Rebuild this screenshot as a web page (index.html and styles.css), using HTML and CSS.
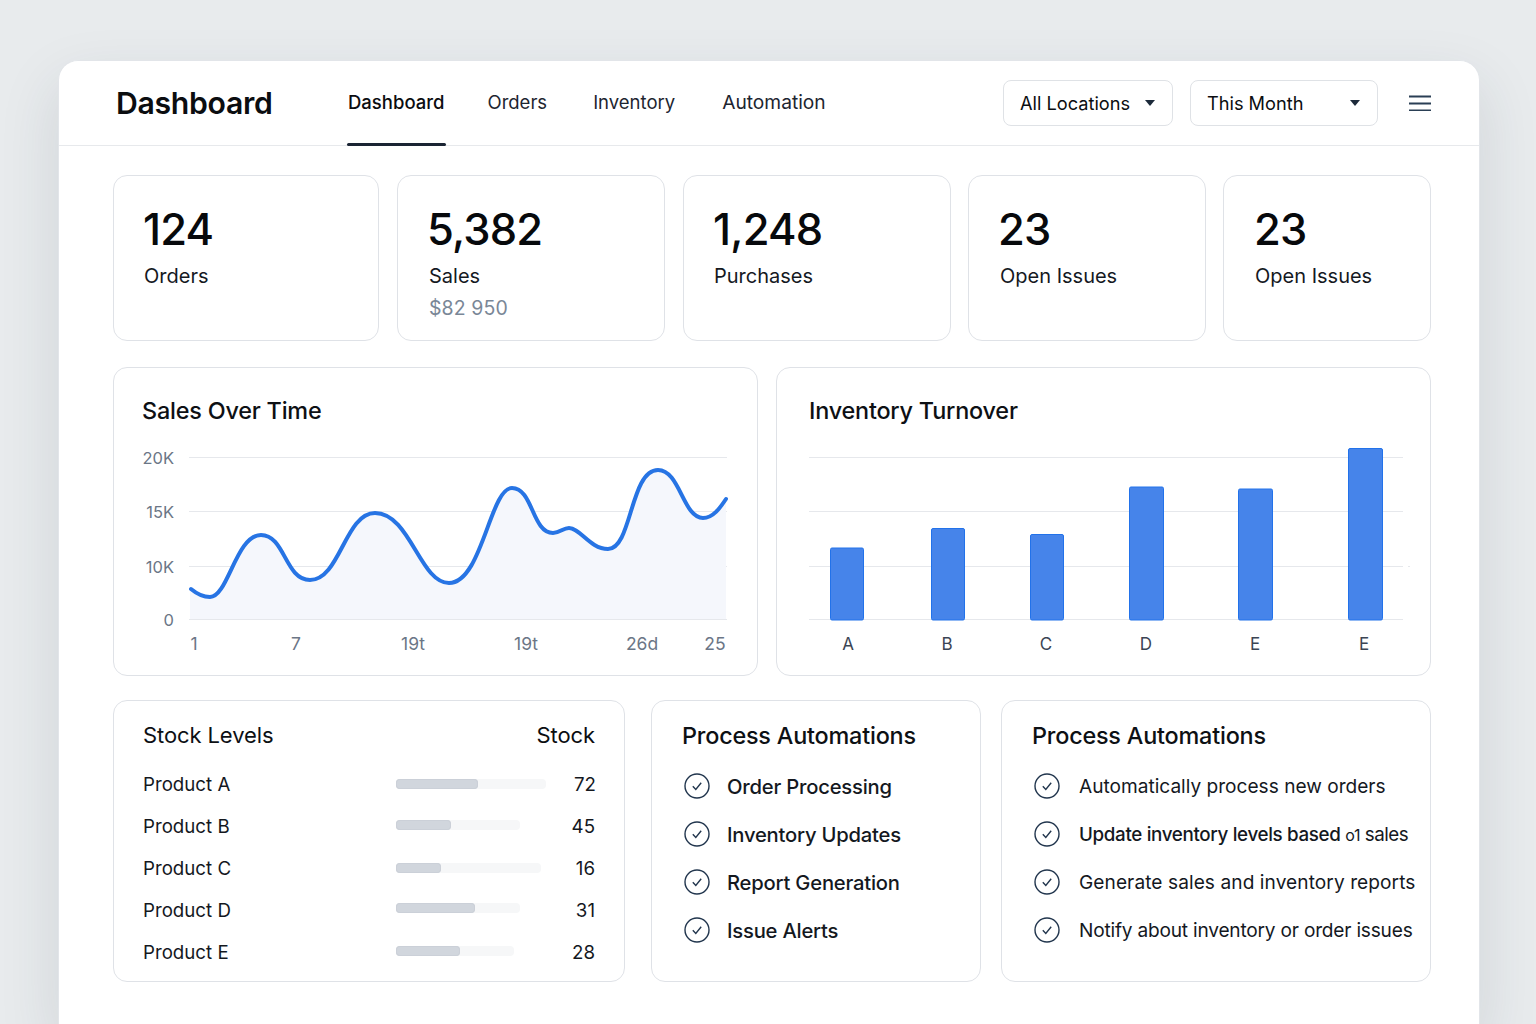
FILE: index.html
```html
<!DOCTYPE html>
<html lang="en">
<head>
<meta charset="utf-8">
<title>Dashboard</title>
<link rel="stylesheet" href="styles.css">
</head>
<body>
<main class="shell">
  <header class="topbar">
    <h1 class="brand">Dashboard</h1>
    <nav class="nav">
      <a class="nav-item active">Dashboard</a>
      <a class="nav-item nav-orders">Orders</a>
      <a class="nav-item nav-inventory">Inventory</a>
      <a class="nav-item nav-automation">Automation</a>
    </nav>
    <div class="controls">
      <div class="select select-loc"><span>All Locations</span><i class="caret"></i></div>
      <div class="select select-month"><span>This Month</span><i class="caret"></i></div>
      <svg class="menu" width="24" height="16" viewBox="0 0 24 16"><path d="M0 1.5h22M0 8.5h22M0 15.5h22"/></svg>
    </div>
  </header>
  <div class="content">
    <section class="stats">
      <div class="card stat"><div class="value">124</div><div class="label">Orders</div></div>
      <div class="card stat"><div class="value">5,382</div><div class="label">Sales</div><div class="sub">$82 950</div></div>
      <div class="card stat"><div class="value">1,248</div><div class="label">Purchases</div></div>
      <div class="card stat"><div class="value">23</div><div class="label">Open Issues</div></div>
      <div class="card stat"><div class="value">23</div><div class="label">Open Issues</div></div>
    </section>
    <section class="charts">
      <div class="card chart">
        <h2 class="title chart-title">Sales Over Time</h2>
        <svg class="plot" width="643" height="240" viewBox="114 440 643 240">
          <path class="grid" d="M189 457.5H727M189 511.5H727M189 566.5H727M189 619.5H727"/>
          <path class="area" d="M190 589C197 594 203 597 210 597C228 597 236 535 261 535C285 535 285 580 310 580C340 580 345 513 375 513C410 513 420 583 449 583C482 583 490 488 512 488C533 488 532 533 553 533C560 533 563 528 569 528C580 528 590 549 608 549C632 549 630 470 658 470C680 470 683 518 703 518C713 518 720 508 726 499V619H190Z"/>
          <path class="line" d="M191 589C197 594 203 597 210 597C228 597 236 535 261 535C285 535 285 580 310 580C340 580 345 513 375 513C410 513 420 583 449 583C482 583 490 488 512 488C533 488 532 533 553 533C560 533 563 528 569 528C580 528 590 549 608 549C632 549 630 470 658 470C680 470 683 518 703 518C713 518 720 508 726 499"/>
          <g class="axis axis-end">
            <text x="174" y="464">20K</text><text x="174" y="518">15K</text><text x="174" y="573">10K</text><text x="174" y="626">0</text>
          </g>
          <g class="axis axis-mid">
            <text x="194" y="650">1</text><text x="296" y="650">7</text><text x="413" y="650">19t</text><text x="526" y="650">19t</text><text x="642" y="650">26d</text><text x="715" y="650">25</text>
          </g>
        </svg>
      </div>
      <div class="card chart">
        <h2 class="title chart-title chart-title-b">Inventory Turnover</h2>
        <svg class="plot" width="653" height="240" viewBox="777 440 653 240">
          <path class="grid" d="M809 457.5H1403M809 511.5H1403M809 566.5H1403M809 619.5H1403M1408 566.5h2"/>
          <rect class="bar" x="830.5" y="548" width="33" height="72" rx="1.5"/>
          <rect class="bar" x="931.5" y="528.5" width="33" height="91.5" rx="1.5"/>
          <rect class="bar" x="1030.5" y="534.5" width="33" height="85.5" rx="1.5"/>
          <rect class="bar" x="1129.5" y="487" width="34" height="133" rx="1.5"/>
          <rect class="bar" x="1238.5" y="489" width="34" height="131" rx="1.5"/>
          <rect class="bar" x="1348.5" y="448.5" width="34" height="171.5" rx="1.5"/>
          <g class="axis axis-mid axis-dark">
            <text x="848" y="650">A</text><text x="947" y="650">B</text><text x="1046" y="650">C</text><text x="1146" y="650">D</text><text x="1255" y="650">E</text><text x="1364" y="650">E</text>
          </g>
        </svg>
      </div>
    </section>
    <section class="lower">
      <div class="card stock">
        <div class="stock-head"><h2 class="title stock-title">Stock Levels</h2><span class="title-side">Stock</span></div>
        <div class="stock-row"><span>Product A</span><div class="track" style="width:150px"><div class="fill" style="width:82px"></div></div><span class="qty">72</span></div>
        <div class="stock-row"><span>Product B</span><div class="track" style="width:124px"><div class="fill" style="width:55px"></div></div><span class="qty">45</span></div>
        <div class="stock-row"><span>Product C</span><div class="track" style="width:145px"><div class="fill" style="width:45px"></div></div><span class="qty">16</span></div>
        <div class="stock-row"><span>Product D</span><div class="track" style="width:124px"><div class="fill" style="width:79px"></div></div><span class="qty">31</span></div>
        <div class="stock-row"><span>Product E</span><div class="track" style="width:118px"><div class="fill" style="width:64px"></div></div><span class="qty">28</span></div>
      </div>
      <div class="card auto">
        <h2 class="title">Process Automations</h2>
        <ul class="checks">
          <li><svg class="check" width="26" height="26" viewBox="0 0 26 26"><circle cx="13" cy="13" r="12"/><path d="M8.8 13.2l3 3.2 5.4-6.6"/></svg>Order Processing</li>
          <li><svg class="check" width="26" height="26" viewBox="0 0 26 26"><circle cx="13" cy="13" r="12"/><path d="M8.8 13.2l3 3.2 5.4-6.6"/></svg>Inventory Updates</li>
          <li><svg class="check" width="26" height="26" viewBox="0 0 26 26"><circle cx="13" cy="13" r="12"/><path d="M8.8 13.2l3 3.2 5.4-6.6"/></svg>Report Generation</li>
          <li><svg class="check" width="26" height="26" viewBox="0 0 26 26"><circle cx="13" cy="13" r="12"/><path d="M8.8 13.2l3 3.2 5.4-6.6"/></svg>Issue Alerts</li>
        </ul>
      </div>
      <div class="card auto auto-long">
        <h2 class="title">Process Automations</h2>
        <ul class="checks">
          <li><svg class="check" width="26" height="26" viewBox="0 0 26 26"><circle cx="13" cy="13" r="12"/><path d="M8.8 13.2l3 3.2 5.4-6.6"/></svg>Automatically process new orders</li>
          <li class="strong"><svg class="check" width="26" height="26" viewBox="0 0 26 26"><circle cx="13" cy="13" r="12"/><path d="M8.8 13.2l3 3.2 5.4-6.6"/></svg><span>Update inventory levels based <small>o1</small> <em>sales</em></span></li>
          <li class="loose"><svg class="check" width="26" height="26" viewBox="0 0 26 26"><circle cx="13" cy="13" r="12"/><path d="M8.8 13.2l3 3.2 5.4-6.6"/></svg>Generate sales and inventory reports</li>
          <li class="tight"><svg class="check" width="26" height="26" viewBox="0 0 26 26"><circle cx="13" cy="13" r="12"/><path d="M8.8 13.2l3 3.2 5.4-6.6"/></svg>Notify about inventory or order issues</li>
        </ul>
      </div>
    </section>
  </div>
</main>
</body>
</html>
```
FILE: styles.css
```css
* { box-sizing: border-box; }
html, body { height: 100%; }
body {
  margin: 0;
  height: 1024px;
  overflow: hidden;
  padding: 60px 56px 0 58px;
  background: #e8ebed;
  color: #0b0d10;
  font-family: Inter, "Liberation Sans", sans-serif;
}
.shell {
  height: 964px;
  background: #fff;
  border: 1px solid #e2e5e9;
  border-bottom: 0;
  border-radius: 20px 20px 0 0;
  box-shadow: 0 24px 60px rgba(40, 52, 70, .13);
}
.topbar {
  height: 85px;
  display: flex;
  align-items: center;
  padding: 0 46px 0 57px;
  border-bottom: 1px solid #e7e9ec;
}
.brand { margin: 0 0 1px; font-size: 30.2px; font-weight: 600; letter-spacing: -.3px; width: 232px; }
.nav { display: flex; height: 100%; flex: 1; }
.nav-item { display: flex; align-items: center; padding-bottom: 2px; font-size: 18.5px; color: #1d2530; font-weight: 400; height: 100%; position: relative; }
.nav-orders { margin-left: 43px; }
.nav-inventory { margin-left: 46px; }
.nav-automation { margin-left: 47px; font-size: 19.2px; }
.nav-item.active { font-weight: 500; color: #0b0d10; }
.nav-item.active::after {
  content: "";
  position: absolute;
  left: -1px; right: -2px; bottom: -1px;
  height: 3.5px;
  border-radius: 2px;
  background: #1a2433;
}
.controls { display: flex; align-items: center; }
.select {
  height: 46px;
  display: flex;
  align-items: center;
  justify-content: space-between;
  padding: 0 17px 0 16px;
  border: 1px solid #dfe2e6;
  border-radius: 8px;
  font-size: 18.2px;
  background: #fff;
}
.select-loc { width: 170px; margin-right: 17px; }
.select-month { width: 188px; margin-right: 31px; }
.caret { width: 0; height: 0; border-left: 5px solid transparent; border-right: 5px solid transparent; border-top: 6px solid #1c2a3a; }
.menu { fill: none; stroke: #2a3f55; stroke-width: 2; }

.content { padding: 29px 47px 0 54px; display: flex; flex-direction: column; }
.card { background: #fff; border: 1px solid #dfe2e7; border-radius: 14px; }
.stats { display: grid; grid-template-columns: 266px 268px 268px 237px 208px; grid-template-rows: 166px; column-gap: 18px; }
.stats .card:nth-child(4) { margin-left: -1px; }
.stats .card:nth-child(5) { margin: 0 1px 0 -1px; }
.stat { padding: 25px 30px; }
.stat:nth-child(2), .stat:nth-child(4), .stat:nth-child(5) { padding-left: 31px; }
.value { font-size: 43.5px; font-weight: 500; line-height: 56px; letter-spacing: -.8px; margin-left: -1px; color: #07090c; }
.stat:nth-child(2) .value, .stat:nth-child(4) .value { margin-left: -2px; }
.label { font-size: 20px; line-height: 34px; margin-top: 2px; color: #15191f; }
.sub { font-size: 19.5px; line-height: 30px; color: #7a8797; letter-spacing: .1px; }

.charts { display: grid; grid-template-columns: 645px 655px; grid-template-rows: 309px; column-gap: 18px; margin-top: 26px; }
.chart { overflow: hidden; position: relative; }
.title { margin: 0; font-size: 23.4px; font-weight: 500; line-height: 30px; letter-spacing: -.2px; color: #0d1014; }
.chart-title { padding: 28px 0 0 28px; }
.chart-title-b { padding-left: 32px; }
.plot { display: block; position: absolute; left: 0; top: 72px; }
.grid { fill: none; stroke: #e6e8ec; stroke-width: 1; }
.area { fill: #f5f7fc; }
.line { fill: none; stroke: #2774e4; stroke-width: 4; stroke-linecap: round; }
.bar { fill: #4684ea; stroke: #2272ea; stroke-width: 1; }
.axis text { font-size: 17.5px; fill: #6b7686; font-family: Inter, "Liberation Sans", sans-serif; }
.axis-end text { text-anchor: end; font-size: 16.5px; }
.axis-mid text { text-anchor: middle; }
.axis-dark text { fill: #3b4554; font-size: 17px; }

.lower { display: grid; grid-template-columns: 518px 330px 430px; grid-template-rows: 282px; column-gap: 20px; margin-top: 24px; }
.stock { margin-right: 6px; padding: 19px 29px 0 29px; }
.stock-head { display: flex; justify-content: space-between; align-items: center; height: 30px; margin-bottom: 13px; }
.stock-title { font-size: 22px; font-weight: 400; letter-spacing: -.1px; }
.title-side { font-size: 22px; font-weight: 400; letter-spacing: -.1px; }
.stock-row { display: grid; grid-template-columns: 253px 1fr 50px; align-items: center; height: 42px; font-size: 18.7px; color: #14181e; }
.stock-row:nth-child(3) .track, .stock-row:nth-child(6) .track { margin-top: -2px; }
.stock-row:nth-child(5) .track { margin-top: -4px; }
.track { height: 10px; border-radius: 4px; background: #f6f7f8; }
.fill { height: 10px; border-radius: 4px; background: #d1d6dd; box-shadow: inset 0 0 0 1px #cbd0d8; }
.qty { text-align: right; }
.auto { padding: 20px 0 0 30px; }
.checks { list-style: none; margin: 11px 0 0; padding: 0; }
.checks li { display: flex; align-items: center; height: 48px; font-size: 20.2px; font-weight: 500; letter-spacing: -.2px; color: #14181e; white-space: nowrap; }
.check { flex: none; margin: 0 17px 0 2px; fill: none; stroke: #22364e; stroke-width: 1.4; }
.auto-long .checks li { font-size: 19.1px; font-weight: 400; letter-spacing: 0; }
.auto-long .check { margin-right: 19px; }
.auto-long .checks li.strong { font-weight: 500; font-size: 18.8px; letter-spacing: -.34px; }
.auto-long .checks li.loose { letter-spacing: .08px; }
.auto-long .checks li.tight { letter-spacing: -.2px; }
.strong small { font-size: 16px; font-weight: 400; }
.strong em { font-style: normal; font-weight: 400; letter-spacing: -.5px; }
```
